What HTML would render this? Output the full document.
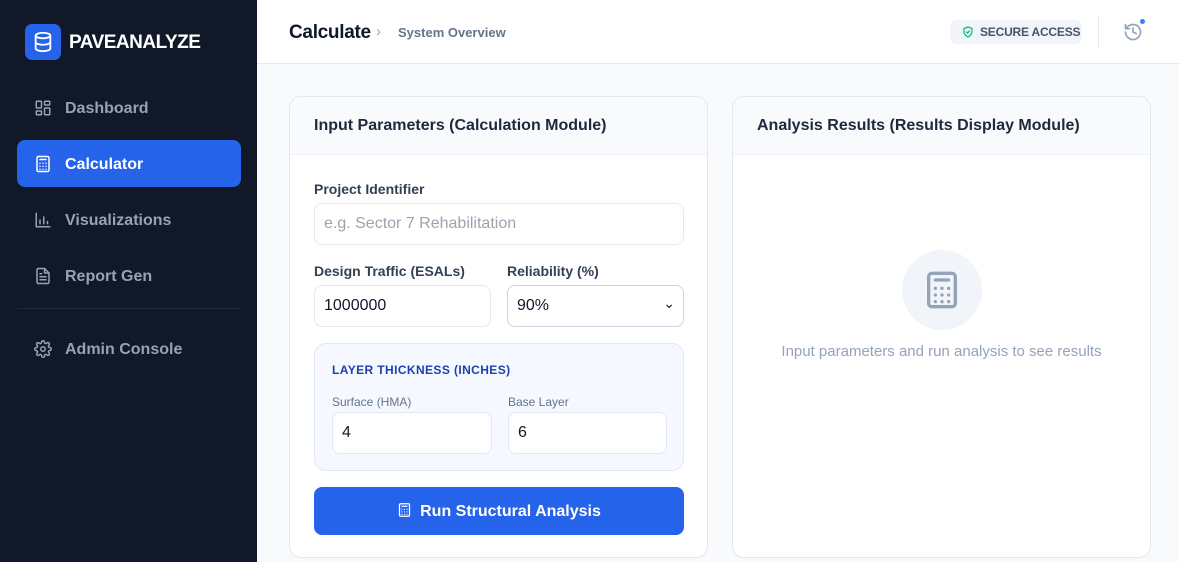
<!DOCTYPE html>
<html><head><style>
*{box-sizing:border-box;margin:0;padding:0}
body{width:1179px;height:562px;overflow:hidden;font-family:"Liberation Sans",sans-serif;background:#f8fafc;position:relative}
svg{stroke-linecap:round;stroke-linejoin:round}
.sb{position:absolute;left:0;top:0;width:257px;height:562px;background:#111827}
.logo{position:absolute;left:25px;top:24px;width:36px;height:36px;background:#2563eb;border-radius:7px;display:flex;align-items:center;justify-content:center}
.brand{position:absolute;left:69px;top:32px;color:#fff;font-weight:bold;font-size:19px;letter-spacing:-0.5px}
.nav{position:absolute;left:17px;width:224px;height:47px;border-radius:8px;color:#94a3b8;font-size:16px;font-weight:bold}
.nav svg{position:absolute;left:17px;top:15px}
.nav span{position:absolute;left:48px;top:16px}
.nav.act{background:#2563eb;color:#fff}
.hdr{position:absolute;left:257px;top:0;right:0;height:64px;background:#fff;border-bottom:1px solid #e2e8f0}
.card{position:absolute;top:96px;width:419px;height:462px;background:#fff;border:1px solid #e2e8f0;border-radius:12px;overflow:hidden}
.ch{height:58px;background:#f8fafc;border-bottom:1px solid #eef2f6;padding:20px 0 0 24px;font-size:16px;font-weight:bold;color:#1e293b}
.lbl{position:absolute;font-size:14px;font-weight:bold;color:#334155}
.inp{position:absolute;height:42px;border:1px solid #e2e8f0;border-radius:8px;background:#fff;font-size:16px;color:#0f172a;padding:11px 0 0 9px}
.sl{position:absolute;font-size:12px;color:#64748b}
</style></head><body>
<div class="sb">
<div class="logo"><svg width="22" height="22" viewBox="0 0 24 24" fill="none" stroke="#fff" stroke-width="2"><ellipse cx="12" cy="5" rx="8" ry="3"/><path d="M4 5v14c0 1.7 3.6 3 8 3s8-1.3 8-3V5M4 12c0 1.7 3.6 3 8 3s8-1.3 8-3"/></svg></div>
<div class="brand">PAVEANALYZE</div>
<div class="nav" style="top:84px"><svg width="18" height="18" viewBox="0 0 24 24" fill="none" stroke="#94a3b8" stroke-width="2"><rect x="3" y="3" width="7" height="9" rx="1"/><rect x="14" y="3" width="7" height="5" rx="1"/><rect x="14" y="12" width="7" height="9" rx="1"/><rect x="3" y="16" width="7" height="5" rx="1"/></svg><span>Dashboard</span></div>
<div class="nav act" style="top:140px"><svg width="18" height="18" viewBox="0 0 24 24" fill="none" stroke="#fff" stroke-width="2"><rect x="4" y="2" width="16" height="20" rx="2"/><path d="M8 6h8M8 11h.01M12 11h.01M16 11h.01M8 15h.01M12 15h.01M16 15h.01M8 19h.01M12 19h.01M16 19h.01"/></svg><span>Calculator</span></div>
<div class="nav" style="top:196px"><svg width="18" height="18" viewBox="0 0 24 24" fill="none" stroke="#94a3b8" stroke-width="2"><path d="M3 3v18h18M8 17v-5M13 17V8M18 17v-3"/></svg><span>Visualizations</span></div>
<div class="nav" style="top:252px"><svg width="18" height="18" viewBox="0 0 24 24" fill="none" stroke="#94a3b8" stroke-width="2"><path d="M14 2H6a2 2 0 0 0-2 2v16a2 2 0 0 0 2 2h12a2 2 0 0 0 2-2V8z"/><path d="M14 2v6h6M8 13h8M8 17h8M8 9h2"/></svg><span>Report Gen</span></div>
<div style="position:absolute;left:17px;top:308px;width:224px;height:1px;background:#1f2937"></div>
<div class="nav" style="top:325px"><svg width="18" height="18" viewBox="0 0 24 24" fill="none" stroke="#94a3b8" stroke-width="2"><circle cx="12" cy="12" r="3"/><path d="M19.4 15a1.7 1.7 0 0 0 .3 1.8l.1.1a2 2 0 1 1-2.8 2.8l-.1-.1a1.7 1.7 0 0 0-1.8-.3 1.7 1.7 0 0 0-1 1.5V21a2 2 0 1 1-4 0v-.1a1.7 1.7 0 0 0-1.1-1.5 1.7 1.7 0 0 0-1.8.3l-.1.1a2 2 0 1 1-2.8-2.8l.1-.1a1.7 1.7 0 0 0 .3-1.8 1.7 1.7 0 0 0-1.5-1H3a2 2 0 1 1 0-4h.1a1.7 1.7 0 0 0 1.5-1.1 1.7 1.7 0 0 0-.3-1.8l-.1-.1a2 2 0 1 1 2.8-2.8l.1.1a1.7 1.7 0 0 0 1.8.3H9a1.7 1.7 0 0 0 1-1.5V3a2 2 0 1 1 4 0v.1a1.7 1.7 0 0 0 1 1.5 1.7 1.7 0 0 0 1.8-.3l.1-.1a2 2 0 1 1 2.8 2.8l-.1.1a1.7 1.7 0 0 0-.3 1.8V9a1.7 1.7 0 0 0 1.5 1H21a2 2 0 1 1 0 4h-.1a1.7 1.7 0 0 0-1.5 1z"/></svg><span>Admin Console</span></div>
</div>
<div class="hdr">
<div style="position:absolute;left:32px;top:22px;font-size:19px;font-weight:bold;color:#0f172a;letter-spacing:-0.3px">Calculate</div>
<div style="position:absolute;left:119px;top:23px;font-size:15px;color:#94a3b8">›</div>
<div style="position:absolute;left:141px;top:25px;font-size:13px;font-weight:bold;color:#64748b">System Overview</div>
<div style="position:absolute;left:693px;top:20px;width:132px;height:24px;background:#f1f5f9;border-radius:7px;font-size:12px;font-weight:bold;color:#475569;padding:5px 0 0 30px;white-space:nowrap;letter-spacing:-0.2px">SECURE ACCESS
<svg style="position:absolute;left:12px;top:6px" width="12" height="12" viewBox="0 0 24 24" fill="none" stroke="#10b981" stroke-width="2.5"><path d="M12 22s8-4 8-10V5l-8-3-8 3v7c0 6 8 10 8 10z"/><path d="M9 12l2 2 4-4"/></svg></div>
<div style="position:absolute;left:841px;top:16px;width:1px;height:32px;background:#e2e8f0"></div>
<svg style="position:absolute;left:866px;top:22px" width="20" height="20" viewBox="0 0 24 24" fill="none" stroke="#94a3b8" stroke-width="2"><path d="M3 12a9 9 0 1 0 3-6.7L3 8M3 3v5h5M12 7v5l4 2"/></svg>
<div style="position:absolute;left:883px;top:19px;width:5px;height:5px;border-radius:50%;background:#3b82f6"></div>
</div>
<div class="card" style="left:289px">
<div class="ch">Input Parameters (Calculation Module)</div>
<div class="lbl" style="left:24px;top:84px">Project Identifier</div>
<div class="inp" style="left:24px;top:106px;width:370px;color:#9ca3af">e.g. Sector 7 Rehabilitation</div>
<div class="lbl" style="left:24px;top:166px">Design Traffic (ESALs)</div>
<div class="inp" style="left:24px;top:188px;width:177px">1000000</div>
<div class="lbl" style="left:217px;top:166px">Reliability (%)</div>
<div class="inp" style="left:217px;top:188px;width:177px;border-color:#cbd5e1">90%<span style="position:absolute;right:8px;top:9px;font-size:14px">⌄</span></div>
<div style="position:absolute;left:24px;top:246px;width:370px;height:128px;background:#f5f8fe;border:1px solid #e2e8f0;border-radius:12px">
<div style="position:absolute;left:17px;top:19px;font-size:12px;font-weight:bold;color:#1e40af;letter-spacing:0.4px">LAYER THICKNESS (INCHES)</div>
<div class="sl" style="left:17px;top:51px">Surface (HMA)</div>
<div class="inp" style="left:17px;top:68px;width:160px">4</div>
<div class="sl" style="left:193px;top:51px">Base Layer</div>
<div class="inp" style="left:193px;top:68px;width:159px">6</div>
</div>
<div style="position:absolute;left:24px;top:390px;width:370px;height:48px;background:#2563eb;border-radius:8px;color:#fff;font-size:16px;font-weight:bold;text-align:center;padding-top:15px"><svg style="vertical-align:-2px;margin-right:8px" width="15" height="16" viewBox="0 0 24 24" fill="none" stroke="#fff" stroke-width="2"><rect x="4" y="2" width="16" height="20" rx="2"/><path d="M8 6h8M8 11h.01M12 11h.01M16 11h.01M8 15h.01M12 15h.01M16 15h.01M8 19h.01M12 19h.01M16 19h.01"/></svg>Run Structural Analysis</div>
</div>
<div class="card" style="left:732px">
<div class="ch">Analysis Results (Results Display Module)</div>
<div style="position:absolute;left:169px;top:153px;width:80px;height:80px;border-radius:50%;background:#f1f5f9;display:flex;align-items:center;justify-content:center"><svg width="40" height="44" viewBox="0 0 24 24" fill="none" stroke="#94a3b8" stroke-width="2"><rect x="4" y="2" width="16" height="20" rx="2"/><path d="M8 6h8M8 11h.01M12 11h.01M16 11h.01M8 15h.01M12 15h.01M16 15h.01M8 19h.01M12 19h.01M16 19h.01"/></svg></div>
<div style="position:absolute;left:0;width:417px;top:246px;text-align:center;font-size:15px;color:#94a3b8">Input parameters and run analysis to see results</div>
</div>
</body></html>
